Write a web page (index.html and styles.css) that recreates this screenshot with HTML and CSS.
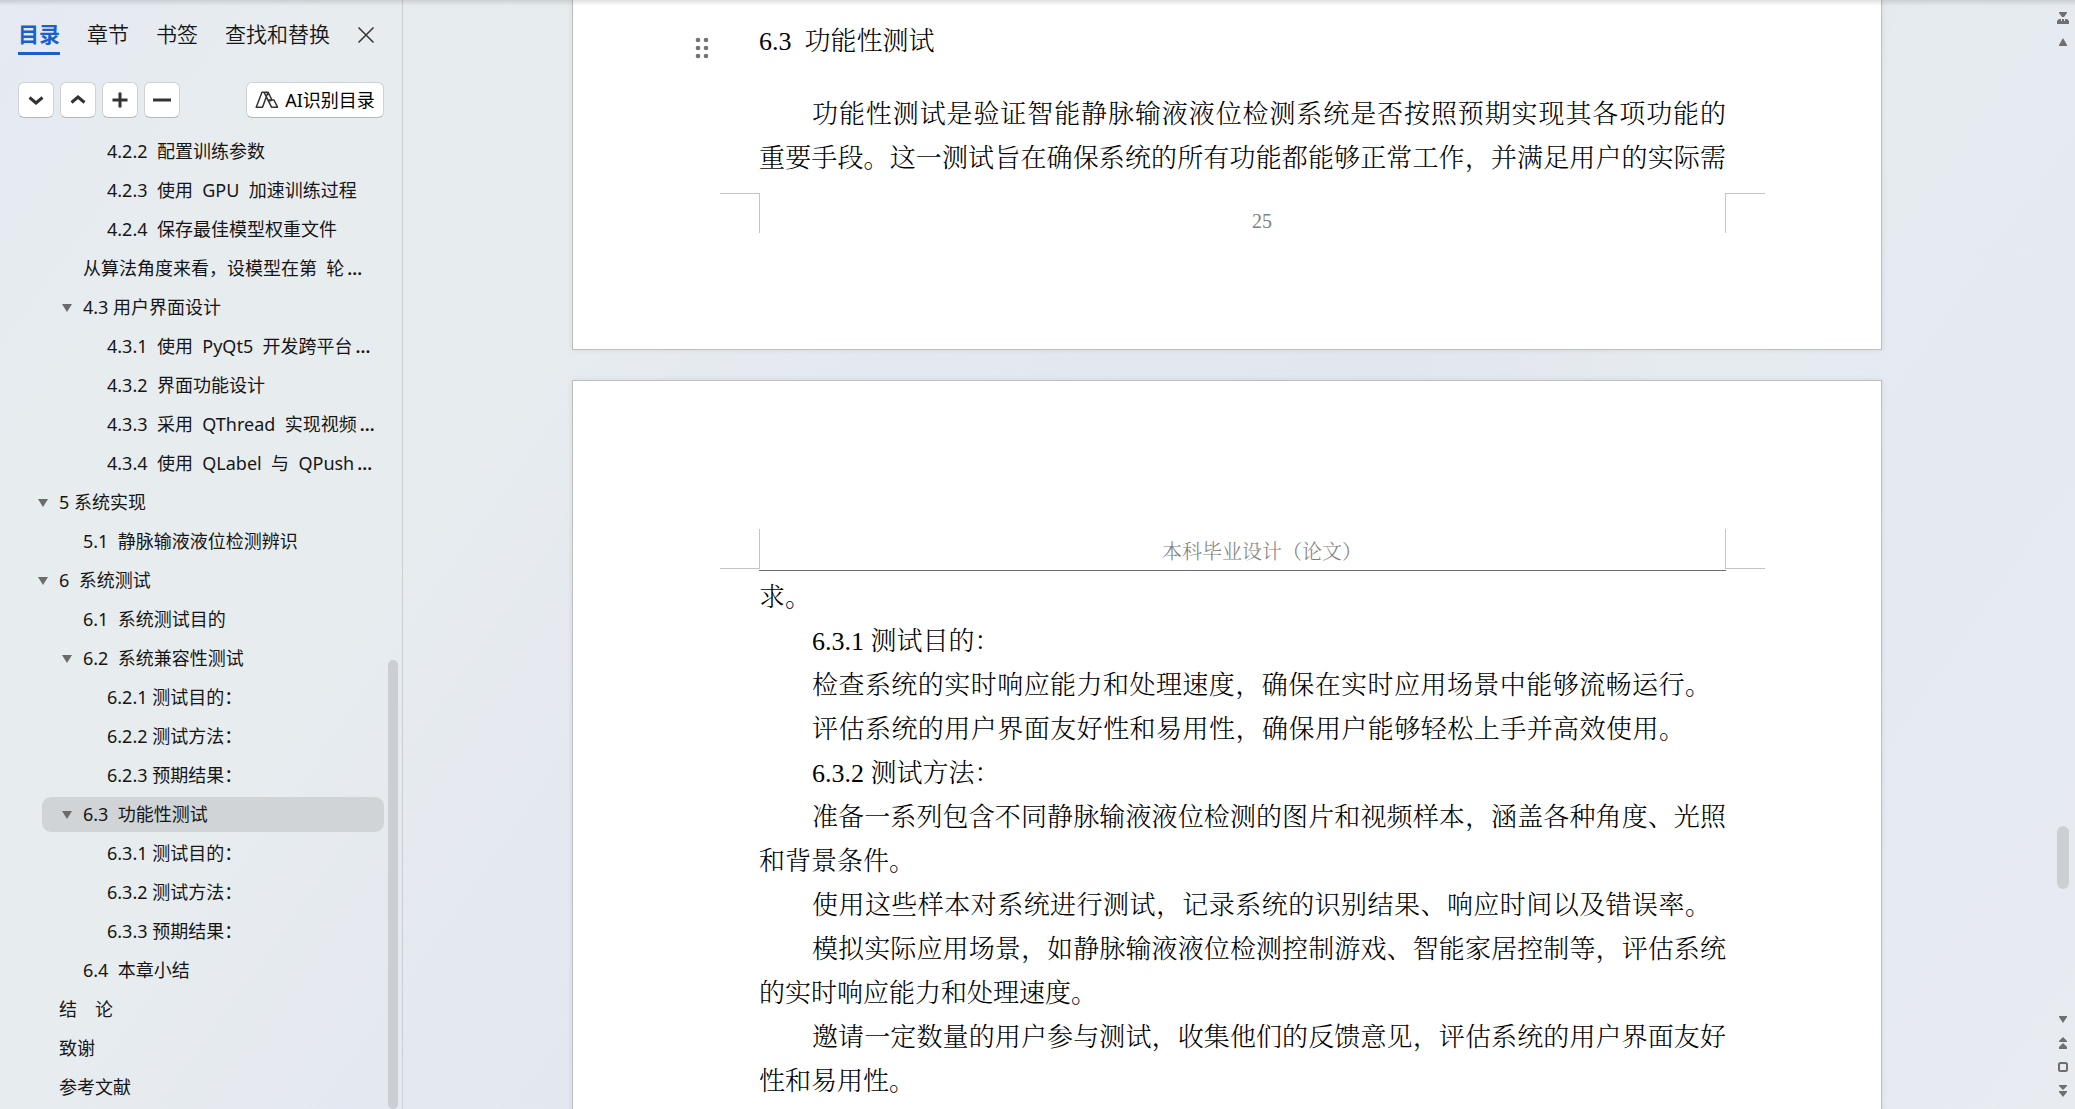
FILE: index.html
```html
<!DOCTYPE html>
<html lang="zh-CN">
<head>
<meta charset="utf-8">
<meta name="viewport" content="width=device-width, initial-scale=1">
<title>本科毕业设计（论文）</title>
<link rel="stylesheet" href="styles.css">
</head>
<body>
<div class="app">
  <aside class="sidebar">
    <nav class="tabs">
      <button class="tab tab--active" type="button">目录</button>
      <button class="tab" type="button">章节</button>
      <button class="tab" type="button">书签</button>
      <button class="tab" type="button">查找和替换</button>
      <button class="close" type="button" aria-label="关闭">
        <svg width="18" height="18" viewBox="0 0 18 18" fill="none" stroke="#333" stroke-width="1.5"><path d="M1.5 1.5l15 15M16.5 1.5l-15 15"/></svg>
      </button>
    </nav>
    <div class="tools">
      <button class="tool" type="button" aria-label="展开"><svg width="20" height="20" viewBox="0 0 20 20" fill="none" stroke="#333" stroke-width="3"><path d="M3.5 7.5l6.5 5.5 6.5-5.5"/></svg></button>
      <button class="tool" type="button" aria-label="收起"><svg width="20" height="20" viewBox="0 0 20 20" fill="none" stroke="#333" stroke-width="3"><path d="M3.5 12.5l6.5-5.5 6.5 5.5"/></svg></button>
      <button class="tool" type="button" aria-label="增加"><svg width="20" height="20" viewBox="0 0 20 20" fill="none" stroke="#333" stroke-width="3"><path d="M2.5 10h15M10 2.5v15"/></svg></button>
      <button class="tool" type="button" aria-label="减少"><svg width="20" height="20" viewBox="0 0 20 20" fill="none" stroke="#333" stroke-width="3"><path d="M1 10h18"/></svg></button>
      <button class="tool tool--ai" type="button">
        <svg width="24" height="18" viewBox="0 0 24 18" fill="none" stroke="#333" stroke-width="1.5" stroke-linejoin="round"><path d="M7 1.2h6L7.5 16.2H1.2L7 1.2zM9 1.2l7.5 15h6L19 9h-5.5M13 1.2L17 9l-4 1.5"/></svg>
        <span>AI识别目录</span>
      </button>
    </div>
    <div class="outline">
      <ul class="tree">
        <li><a class="node level-3" href="#">4.2.2&nbsp; 配置训练参数</a></li>
        <li><a class="node level-3" href="#">4.2.3&nbsp; 使用&nbsp; GPU&nbsp; 加速训练过程</a></li>
        <li><a class="node level-3" href="#">4.2.4&nbsp; 保存最佳模型权重文件</a></li>
        <li><a class="node level-2" href="#">从算法角度来看，设模型在第&nbsp; 轮<span class="dots">…</span></a></li>
        <li><a class="node level-2 node--open" href="#">4.3 用户界面设计</a></li>
        <li><a class="node level-3" href="#">4.3.1&nbsp; 使用&nbsp; PyQt5&nbsp; 开发跨平台<span class="dots">…</span></a></li>
        <li><a class="node level-3" href="#">4.3.2&nbsp; 界面功能设计</a></li>
        <li><a class="node level-3" href="#">4.3.3&nbsp; 采用&nbsp; QThread&nbsp; 实现视频<span class="dots">…</span></a></li>
        <li><a class="node level-3" href="#">4.3.4&nbsp; 使用&nbsp; QLabel&nbsp; 与&nbsp; QPush<span class="dots">…</span></a></li>
        <li><a class="node level-1 node--open" href="#">5 系统实现</a></li>
        <li><a class="node level-2" href="#">5.1&nbsp; 静脉输液液位检测辨识</a></li>
        <li><a class="node level-1 node--open" href="#">6&nbsp; 系统测试</a></li>
        <li><a class="node level-2" href="#">6.1&nbsp; 系统测试目的</a></li>
        <li><a class="node level-2 node--open" href="#">6.2&nbsp; 系统兼容性测试</a></li>
        <li><a class="node level-3" href="#">6.2.1 测试目的：</a></li>
        <li><a class="node level-3" href="#">6.2.2 测试方法：</a></li>
        <li><a class="node level-3" href="#">6.2.3 预期结果：</a></li>
        <li><a class="node level-2 node--open node--current" href="#" aria-current="true">6.3&nbsp; 功能性测试</a></li>
        <li><a class="node level-3" href="#">6.3.1 测试目的：</a></li>
        <li><a class="node level-3" href="#">6.3.2 测试方法：</a></li>
        <li><a class="node level-3" href="#">6.3.3 预期结果：</a></li>
        <li><a class="node level-2" href="#">6.4&nbsp; 本章小结</a></li>
        <li><a class="node level-1" href="#">结　论</a></li>
        <li><a class="node level-1" href="#">致谢</a></li>
        <li><a class="node level-1" href="#">参考文献</a></li>
      </ul>
      <div class="track"><div class="thumb"></div></div>
    </div>
  </aside>

  <main class="workspace">
    <article class="sheet sheet--upper">
      <svg class="grip" width="14" height="22" viewBox="0 0 14 22" fill="#737373"><circle cx="3" cy="3" r="2.3"/><circle cx="11" cy="3" r="2.3"/><circle cx="3" cy="11" r="2.3"/><circle cx="11" cy="11" r="2.3"/><circle cx="3" cy="19" r="2.3"/><circle cx="11" cy="19" r="2.3"/></svg>
      <h2 class="heading">6.3&nbsp; 功能性测试</h2>
      <p class="para">
        <span class="line line--first line--full">功能性测试是验证智能静脉输液液位检测系统是否按照预期实现其各项功能的</span>
        <span class="line line--full">重要手段。这一测试旨在确保系统的所有功能都能够正常工作，并满足用户的实际需</span>
      </p>
      <footer class="margin margin--bottom">25</footer>
    </article>
    <article class="sheet sheet--lower">
      <header class="margin margin--top">本科毕业设计（论文）</header>
      <div class="body">
        <p class="para"><span class="line">求。</span></p>
        <h3 class="para"><span class="line line--first">6.3.1 测试目的：</span></h3>
        <p class="para"><span class="line line--first line--full line--inset-1">检查系统的实时响应能力和处理速度，确保在实时应用场景中能够流畅运行。</span></p>
        <p class="para"><span class="line line--first line--full line--inset-2">评估系统的用户界面友好性和易用性，确保用户能够轻松上手并高效使用。</span></p>
        <h3 class="para"><span class="line line--first">6.3.2 测试方法：</span></h3>
        <p class="para">
          <span class="line line--first line--full">准备一系列包含不同静脉输液液位检测的图片和视频样本，涵盖各种角度、光照</span>
          <span class="line">和背景条件。</span>
        </p>
        <p class="para"><span class="line line--first line--full line--inset-1">使用这些样本对系统进行测试，记录系统的识别结果、响应时间以及错误率。</span></p>
        <p class="para">
          <span class="line line--first line--full">模拟实际应用场景，如静脉输液液位检测控制游戏、智能家居控制等，评估系统</span>
          <span class="line">的实时响应能力和处理速度。</span>
        </p>
        <p class="para">
          <span class="line line--first line--full">邀请一定数量的用户参与测试，收集他们的反馈意见，评估系统的用户界面友好</span>
          <span class="line">性和易用性。</span>
        </p>
      </div>
    </article>
  </main>

  <div class="rail">
    <svg width="12" height="12" viewBox="0 0 12 12" fill="#6f6f6f"><path d="M2 0h8v1L7 5H5L2 1zM2 7h2v2h1V7h2v2h1V7h2l2 2v3H0V9z"/></svg>
    <svg class="rail-up" width="8" height="8" viewBox="0 0 8 8" fill="#6f6f6f"><path d="M4 0l4 7v1H0V7z"/></svg>
    <div class="rail-track"><div class="rail-thumb"></div></div>
    <div class="rail-foot">
      <svg width="10" height="8" viewBox="0 0 10 8" fill="#6f6f6f"><path d="M1 0h8v1L5 7 1 1z"/></svg>
      <svg width="10" height="12" viewBox="0 0 10 12" fill="#6f6f6f"><path d="M5 0l4 4v1H1V4zM5 6l4 4v2H1v-2z"/></svg>
      <svg width="10" height="10" viewBox="0 0 10 10" fill="none" stroke="#6f6f6f" stroke-width="2"><rect x="1" y="1" width="8" height="8" rx="1.5"/></svg>
      <svg width="10" height="12" viewBox="0 0 10 12" fill="#6f6f6f"><path d="M1 0h8v1L5 5 1 1zM1 6h8v1l-4 5-4-5z"/></svg>
    </div>
  </div>
</div>
</body>
</html>
```
FILE: styles.css
```css
* {
  box-sizing: border-box;
}

body {
  margin: 0;
  color: #161616;
  font-family: "Noto Sans", "Noto Sans CJK SC", sans-serif;
  background: #e6ebf0;
}

button {
  padding: 0;
  border: 0;
  background: none;
  color: inherit;
  font: inherit;
}

.app {
  position: relative;
  display: flex;
  height: 100vh;
  overflow: hidden;
  background: linear-gradient(125deg, #e5eaf3 0%, #e7ecef 12%, #e7ecef 28%, #e4e8f0 40%, #e2e6ee 58%, #e6ebef 68%, #e5eaf2 82%, #e8ebf0 100%);
}

/* soft shadow cast by the toolbar above */
.app::before {
  content: "";
  position: absolute;
  z-index: 2;
  inset: 0 0 auto;
  height: 6px;
  background: linear-gradient(rgba(0, 0, 0, 0.12), rgba(0, 0, 0, 0));
}

/* ---- sidebar ---- */

.sidebar {
  display: flex;
  flex: none;
  flex-direction: column;
  width: 403px;
  border-right: 1px solid #cbced2;
}

.tabs {
  display: flex;
  gap: 27px;
  align-items: center;
  padding: 15px 18px 0;
  font-size: 21px;
  line-height: 38px;
  font-weight: 350;
}

.tab {
  height: 40px;
  border-bottom: 3px solid transparent;
}

.tab--active {
  border-color: #1a5fd0;
  color: #1a5fd0;
  font-weight: 700;
}

.close {
  display: flex;
}

.tools {
  display: flex;
  gap: 6px;
  padding: 27px 18px 14px;
}

.tool {
  display: flex;
  align-items: center;
  justify-content: center;
  width: 36px;
  height: 36px;
  border: 1px solid #cdd0d4;
  border-bottom-color: #b4b7ba;
  border-radius: 6px;
  background: #fff;
}

.tool--ai {
  gap: 6px;
  width: 138px;
  margin-left: auto;
  color: #000;
  font-size: 18px;
  line-height: 24px;
}

.outline {
  display: flex;
  flex: 1;
  min-height: 0;
}

.tree {
  flex: 1;
  min-width: 0;
  margin: 0;
  padding: 0;
  list-style: none;
}

.node {
  display: flex;
  align-items: center;
  position: relative;
  height: 35px;
  margin: 2px 4px 4px 0;
  padding-left: 41px;
  border-radius: 9px;
  color: inherit;
  font-size: 18px;
  line-height: 35px;
  text-decoration: none;
  white-space: pre;
}

.level-1 {
  margin-left: 18px;
}

.level-2 {
  margin-left: 42px;
}

.level-3 {
  margin-left: 66px;
}

.node--open::before {
  content: "";
  position: absolute;
  left: 20px;
  border: 5px solid transparent;
  border-top: 8px solid #6b6b6b;
  border-bottom: 0;
}

.node--current {
  background: #d0d4d7;
}

.dots {
  padding-left: 3px;
  font-weight: 600;
}

.track {
  display: flex;
  flex-direction: column;
  justify-content: flex-end;
  width: 14px;
}

.thumb {
  width: 10px;
  height: 46%;
  border-radius: 5px;
  background: #cbced2;
}

/* ---- document ---- */

.workspace {
  display: flex;
  flex: 1;
  flex-direction: column;
  gap: 30px;
  align-items: center;
  min-width: 0;
}

.sheet {
  position: relative;
  flex: none;
  width: 100%;
  max-width: 1310px;
  padding: 0 155px 0 186px;
  border: 1px solid #bcbfc1;
  background: #fff;
  box-shadow: 0 0 6px rgba(0, 0, 0, 0.08);
  color: #000;
  font-family: "Liberation Serif", "Noto Serif CJK SC", "Noto Sans CJK SC", serif;
  font-size: 26px;
  font-weight: 300;
  line-height: 44px;
}

.sheet--upper {
  padding-top: 20px;
  padding-bottom: 118px;
  border-top: 0;
}

.sheet--lower {
  padding-top: 148px;
  padding-bottom: 190px;
}

.grip {
  position: absolute;
  top: 37px;
  left: 122px;
}

.heading,
.para {
  margin: 0;
  font-size: 26px;
  font-weight: 300;
}

.heading {
  margin-bottom: 29px;
}

.line {
  display: block;
  white-space: nowrap;
}

.line--first {
  padding-left: 53px;
}

.line--full {
  text-align-last: justify;
  white-space: normal;
}

.line--inset-1 {
  padding-right: 15px;
}

.line--inset-2 {
  padding-right: 41px;
}

/* page header and footer, with the crop marks at their corners */
.margin {
  position: relative;
  padding-left: 39px;
  color: #808080;
  font-size: 20px;
  text-align: center;
}

.margin--top {
  height: 42px;
  margin-bottom: 5px;
  border-bottom: 1px solid #6f6f6f;
  line-height: 47px;
}

.margin--bottom {
  height: 38px;
  margin-top: 12px;
  line-height: 56px;
}

.margin::before,
.margin::after {
  content: "";
  position: absolute;
  top: 0;
  width: 39px;
  height: 39px;
  border: 0 solid #c4c4c4;
}

.margin::before {
  right: calc(100% - 1px);
  border-right-width: 1px;
}

.margin::after {
  left: calc(100% - 1px);
  border-left-width: 1px;
}

.margin--top::before,
.margin--top::after {
  border-bottom-width: 1px;
}

.margin--bottom::before,
.margin--bottom::after {
  border-top-width: 1px;
}

/* ---- scroll rail ---- */

.rail {
  display: flex;
  flex: none;
  flex-direction: column;
  align-items: center;
  width: 24px;
  padding: 12px 0;
}

.rail-up {
  margin: 14px 0;
}

.rail-track {
  display: flex;
  flex: 1;
  flex-direction: column;
  justify-content: flex-end;
  padding-bottom: 127px;
}

.rail-thumb {
  width: 12px;
  height: 63px;
  border-radius: 6px;
  background: #cdd0d3;
}

.rail-foot {
  display: flex;
  flex-direction: column;
  gap: 13px;
  align-items: center;
}
```
